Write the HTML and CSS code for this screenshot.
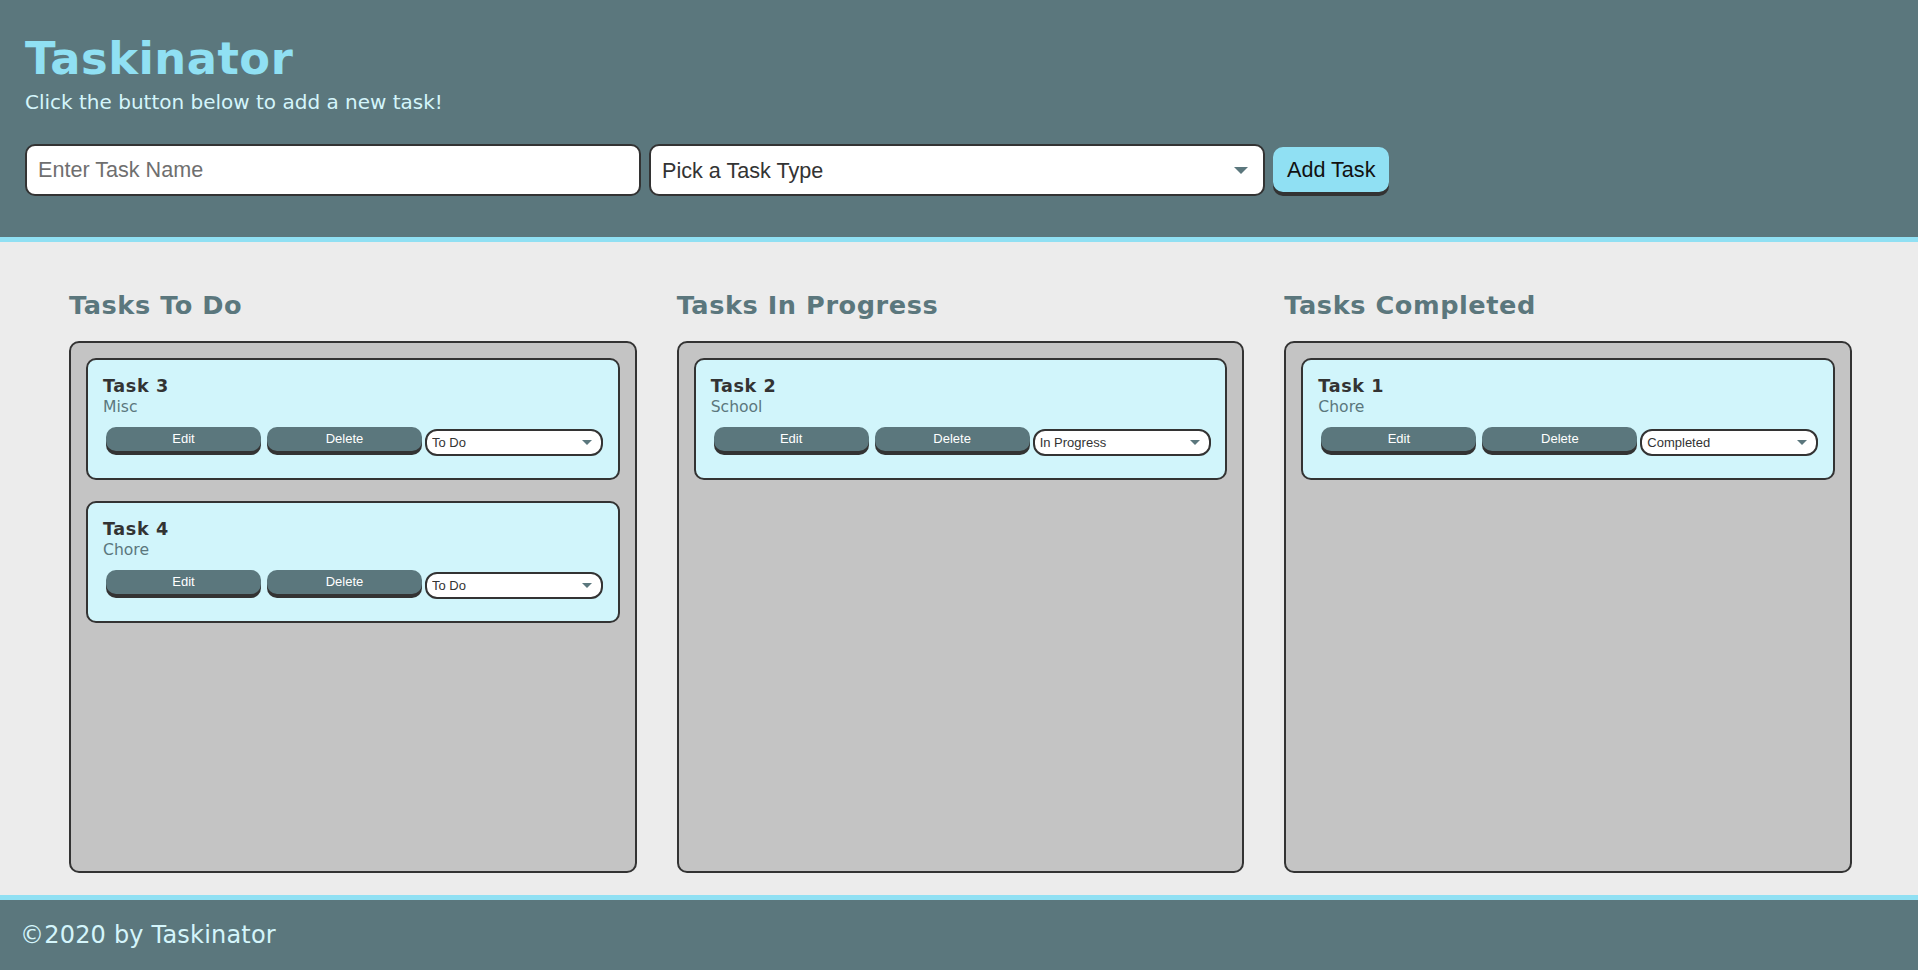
FILE: index.html
```html
<!DOCTYPE html>
<html lang="en">
<head>
<meta charset="utf-8">
<title>Taskinator</title>
<link rel="stylesheet" href="styles.css">
</head>
<body>
<header class="header">
  <h1 class="page-title">Taskinator</h1>
  <p class="subtitle">Click the button below to add a new task!</p>
  <form class="task-form">
    <input class="text-input" type="text" name="task-name" placeholder="Enter Task Name">
    <div class="select-wrap select-wrap-lg">
      <select class="select-input" name="task-type">
        <option value="" selected disabled>Pick a Task Type</option>
        <option>Misc</option>
        <option>School</option>
        <option>Chore</option>
      </select>
    </div>
    <button class="btn-add" type="button">Add Task</button>
  </form>
</header>

<main class="page-content">
  <section class="task-list-wrapper">
    <h2 class="list-title">Tasks To Do</h2>
    <ul class="task-list">
      <li class="task-item">
        <div class="task-info">
          <h3 class="task-name">Task 3</h3>
          <span class="task-type">Misc</span>
        </div>
        <div class="task-actions">
          <button class="btn" type="button">Edit</button>
          <button class="btn" type="button">Delete</button>
          <div class="select-wrap select-wrap-sm">
            <select class="select-status"><option selected>To Do</option><option>In Progress</option><option>Completed</option></select>
          </div>
        </div>
      </li>
      <li class="task-item">
        <div class="task-info">
          <h3 class="task-name">Task 4</h3>
          <span class="task-type">Chore</span>
        </div>
        <div class="task-actions">
          <button class="btn" type="button">Edit</button>
          <button class="btn" type="button">Delete</button>
          <div class="select-wrap select-wrap-sm">
            <select class="select-status"><option selected>To Do</option><option>In Progress</option><option>Completed</option></select>
          </div>
        </div>
      </li>
    </ul>
  </section>

  <section class="task-list-wrapper">
    <h2 class="list-title">Tasks In Progress</h2>
    <ul class="task-list">
      <li class="task-item">
        <div class="task-info">
          <h3 class="task-name">Task 2</h3>
          <span class="task-type">School</span>
        </div>
        <div class="task-actions">
          <button class="btn" type="button">Edit</button>
          <button class="btn" type="button">Delete</button>
          <div class="select-wrap select-wrap-sm">
            <select class="select-status"><option>To Do</option><option selected>In Progress</option><option>Completed</option></select>
          </div>
        </div>
      </li>
    </ul>
  </section>

  <section class="task-list-wrapper">
    <h2 class="list-title">Tasks Completed</h2>
    <ul class="task-list">
      <li class="task-item">
        <div class="task-info">
          <h3 class="task-name">Task 1</h3>
          <span class="task-type">Chore</span>
        </div>
        <div class="task-actions">
          <button class="btn" type="button">Edit</button>
          <button class="btn" type="button">Delete</button>
          <div class="select-wrap select-wrap-sm">
            <select class="select-status"><option>To Do</option><option>In Progress</option><option selected>Completed</option></select>
          </div>
        </div>
      </li>
    </ul>
  </section>
</main>

<footer class="footer">
  <p class="footer-text">&copy;2020 by Taskinator</p>
</footer>
</body>
</html>
```

FILE: styles.css
```css
* {
  box-sizing: border-box;
}

html, body {
  margin: 0;
  padding: 0;
}

body {
  height: 100vh;
  display: flex;
  flex-direction: column;
  background: #ececec;
  font-family: "DejaVu Sans", Verdana, sans-serif;
  color: #333;
}

/* Header */
.header {
  background: #5b777d;
  border-bottom: 5px solid #90e0f3;
  padding: 33px 25px 41px;
  flex: 0 0 auto;
}

.page-title {
  margin: 0;
  font-size: 44.8px;
  line-height: 52px;
  font-weight: bold;
  letter-spacing: 0.5px;
  color: #90e0f3;
}

.subtitle {
  margin: 6px 0 0;
  font-size: 20px;
  line-height: 23px;
  color: #d4f5fb;
}

.task-form {
  margin-top: 30px;
  display: flex;
  align-items: flex-end;
  gap: 8px;
}

.text-input {
  width: 616px;
  height: 52px;
  border: 2px solid #333;
  border-radius: 10px;
  padding: 0 11px;
  font-family: "Liberation Sans", Arial, sans-serif;
  font-size: 21.6px;
  color: #333;
  background: #fff;
  outline: none;
}

.text-input::placeholder {
  color: #6f6f6f;
}

.select-wrap {
  position: relative;
}

.select-wrap::after {
  content: "";
  position: absolute;
  top: 50%;
  width: 0;
  height: 0;
  border-style: solid;
  border-color: #5b777d transparent transparent transparent;
  pointer-events: none;
}

.select-wrap-lg {
  width: 616px;
}

.select-wrap-lg::after {
  right: 17px;
  margin-top: -3px;
  border-width: 7px 7px 0 7px;
}

.select-input {
  appearance: none;
  -webkit-appearance: none;
  width: 100%;
  height: 52px;
  border: 2px solid #333;
  border-radius: 10px;
  padding: 0 11px;
  font-family: "Liberation Sans", Arial, sans-serif;
  font-size: 21.6px;
  color: #333;
  background: #fff;
  outline: none;
}

.btn-add {
  height: 45px;
  margin-bottom: 4px;
  padding: 0 14px;
  border: none;
  border-radius: 10px;
  background: #90e0f3;
  box-shadow: 0 4px 0 #333;
  font-family: "Liberation Sans", Arial, sans-serif;
  font-size: 21.6px;
  color: #111;
}

/* Main */
.page-content {
  flex: 1 1 auto;
  display: grid;
  grid-template-columns: repeat(3, 1fr);
  column-gap: 40px;
  padding: 48px 66px 22px 69px;
  min-height: 0;
}

.task-list-wrapper {
  display: flex;
  flex-direction: column;
  min-height: 0;
}

.list-title {
  margin: 0 0 21px;
  font-size: 25.6px;
  line-height: 30px;
  font-weight: bold;
  letter-spacing: 0.55px;
  color: #5b777d;
}

.task-list {
  flex: 1 1 auto;
  list-style: none;
  margin: 0;
  padding: 15px;
  background: #c4c4c4;
  border: 2px solid #333;
  border-radius: 10px;
  display: flex;
  flex-direction: column;
  gap: 21px;
}

.task-item {
  background: #d1f5fb;
  border: 2px solid #333;
  border-radius: 10px;
  padding: 16px 14px 22px 15px;
}

.task-name {
  margin: 0;
  font-size: 17.6px;
  line-height: 20.5px;
  font-weight: bold;
  letter-spacing: 0.6px;
  color: #333;
}

.task-type {
  display: block;
  font-size: 15.6px;
  line-height: 20px;
  color: #5b777d;
}

.task-actions {
  margin-top: 10px;
  display: flex;
  align-items: flex-start;
}

.btn {
  width: 155px;
  height: 24px;
  margin: 0 3px 4px;
  padding: 0;
  border: none;
  border-radius: 10px;
  background: #5b777d;
  box-shadow: 0 4px 0 #333;
  font-family: "Liberation Sans", Arial, sans-serif;
  font-size: 13px;
  color: #fff;
}

.select-wrap-sm {
  width: 178px;
  margin-top: 2px;
}

.select-wrap-sm::after {
  right: 11px;
  margin-top: -2px;
  border-width: 5px 5px 0 5px;
}

.select-status {
  appearance: none;
  -webkit-appearance: none;
  width: 100%;
  height: 27.5px;
  border: 2px solid #333;
  border-radius: 12px;
  padding: 0 5px;
  font-family: "Liberation Sans", Arial, sans-serif;
  font-size: 13px;
  color: #333;
  background: #fff;
  outline: none;
}

/* Footer */
.footer {
  flex: 0 0 auto;
  background: #5b777d;
  border-top: 5px solid #90e0f3;
  padding: 21px 20px;
}

.footer-text {
  margin: 0;
  font-size: 24px;
  line-height: 28px;
  letter-spacing: 0.2px;
  color: #d4f5fb;
}
```
